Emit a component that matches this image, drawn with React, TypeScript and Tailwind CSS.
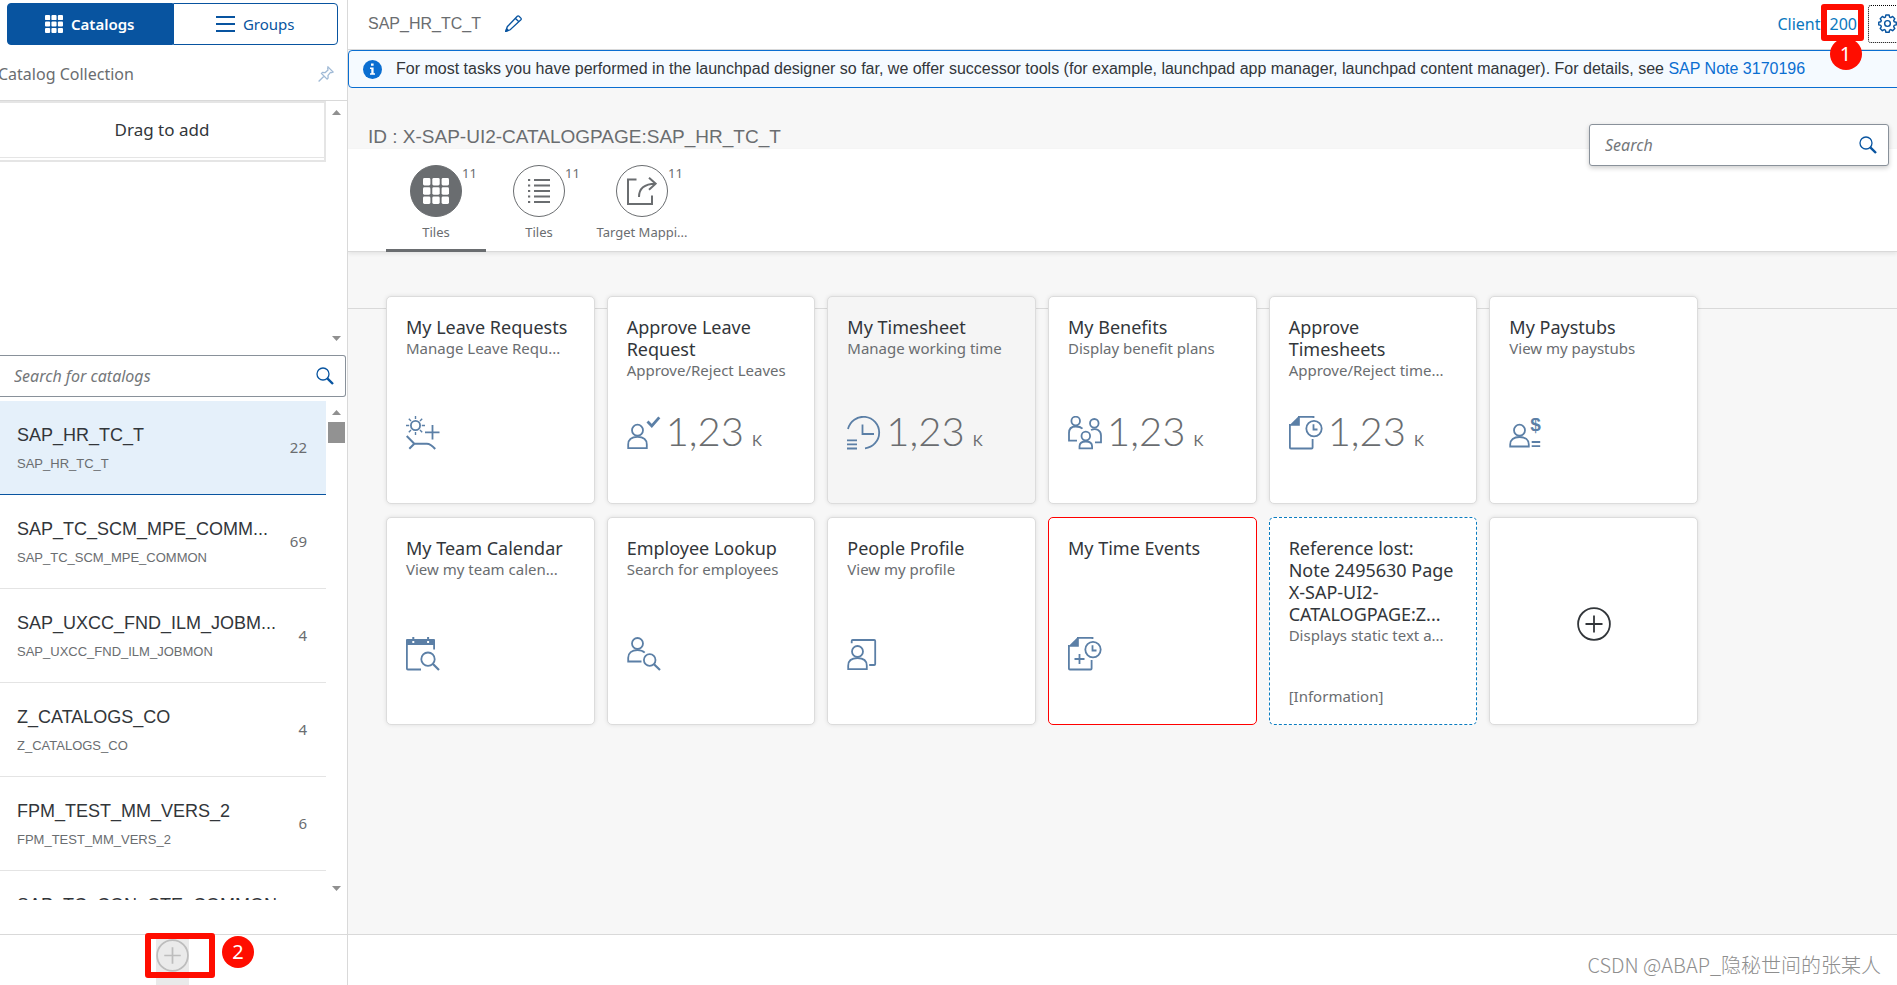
import type { ReactNode } from "react";

type IconProps = { className?: string };

function TileIcon({ children }: { children: ReactNode }) {
  return (
    <svg
      className="h-[34px] w-[34px] shrink-0 text-[#5b7fa6]"
      viewBox="0 0 34 34"
      fill="none"
      stroke="currentColor"
      strokeWidth="1.8"
      aria-hidden="true"
    >
      {children}
    </svg>
  );
}

const LeaveIcon = () => (
  <TileIcon>
    <circle cx="9.5" cy="9.5" r="4.6" />
    <path
      strokeWidth="1.4"
      d="M9.5 0v3M9.5 16v3M0 9.5h3.2M15.8 9.5H19M2.8 2.8l2.2 2.2M14 14l2.2 2.2M16.2 2.8L14 5M5 14l-2.200 2.200"
    />
    <path d="M26.500 9v14.500M19 16.300h14.500" />
    <path strokeWidth="2" d="M.7 20l7.600 7.700h12.500c3.700 0 6 2.500 8.400 5.300M8.300 27.700l-5 5" />
  </TileIcon>
);

const ApproveLeaveIcon = () => (
  <TileIcon>
    <circle cx="10.500" cy="14.200" r="5.500" />
    <path d="M1.200 32.200v-3.700c0-4.800 3.500-7.700 9.300-7.700s9.300 2.900 9.300 7.700v3.700z" />
    <path strokeWidth="2.800" d="M20.500 5.500l4.300 4.500 7.500-8.700" />
  </TileIcon>
);

const TimesheetIcon = () => (
  <TileIcon>
    <path d="M1 13A15.800 15.800 0 1 1 18 32.300" />
    <path d="M15.500 8.500v9.500h11.500M0 24.300h10M0 28.400h10M0 32.500h10" />
  </TileIcon>
);

const BenefitsIcon = () => (
  <TileIcon>
    <circle cx="7.700" cy="5" r="4.300" />
    <circle cx="26.300" cy="7.300" r="4.300" />
    <circle cx="17.800" cy="20" r="4.300" />
    <path d="M9 24.700H1V17c0-4 2.500-6.500 6.700-6.500 3 0 5.300.7 6.800 2.200" />
    <path d="M23 14c5.500-2.300 10 .7 10 5.500v6.800h-6" />
    <path d="M11.500 32.300v-1.800c0-3 2.300-5 6.300-5s6.300 2 6.300 5v1.800z" />
  </TileIcon>
);

const DocClock = () => (
  <>
    <path fill="currentColor" stroke="none" d="M0 9.800L9.800 0h1v9.800z" />
    <path d="M9 .9h15.500v1.200M.9 8v23.500a1 1 0 0 0 1 1h20.700a1 1 0 0 0 1-1V23" />
    <circle cx="25" cy="12.600" r="7.700" />
    <path d="M24.500 8.300v5.200h4" />
  </>
);

const ApproveTimesheetIcon = () => (
  <TileIcon>
    <DocClock />
  </TileIcon>
);

const PaystubIcon = () => (
  <TileIcon>
    <circle cx="10.500" cy="14.200" r="5.500" />
    <path d="M1.200 30.500v-2c0-4.500 3.500-7.500 9.300-7.500s9.300 3 9.300 7.500v2z" />
    <path d="M22.700 26h8.500M22.700 30.200h8.500" />
    <text
      x="26.500"
      y="15"
      textAnchor="middle"
      fill="currentColor"
      stroke="none"
      className="font-['Liberation_Sans',Arial,sans-serif] text-[19px] font-bold"
    >
      $
    </text>
  </TileIcon>
);

const CalendarIcon = () => (
  <TileIcon>
    <path
      fill="currentColor"
      stroke="none"
      fillRule="evenodd"
      d="M1 2h5.300V0h2v2h12.800V0h2v2H28a1 1 0 0 1 1 1v5H0V3a1 1 0 0 1 1-1zm5.300 2v2h2V4zm14.800 0v2h2V4z"
    />
    <path d="M.9 7v24.500a1 1 0 0 0 1 1H15M28.100 7v5.500" />
    <circle cx="22" cy="22.200" r="6.700" />
    <path strokeWidth="2.200" d="M27 27l6 6" />
  </TileIcon>
);

const LookupIcon = () => (
  <TileIcon>
    <circle cx="10.500" cy="6.500" r="5.500" />
    <path d="M14.500 24.500H1.200v-3.700c0-4.800 3.500-7.700 9.300-7.700 3.200 0 5.600 1 7.200 2.600" />
    <circle cx="22.700" cy="23" r="5.800" />
    <path strokeWidth="2.200" d="M27 27.200l6 5.800" />
  </TileIcon>
);

const ProfileIcon = () => (
  <TileIcon>
    <path d="M4.700 6.300V4a1 1 0 0 1 1-1h21.500a1 1 0 0 1 1 1v23a1 1 0 0 1-1 1h-5" />
    <circle cx="10.500" cy="14.500" r="5.500" />
    <path d="M1.200 32.200v-3.500c0-4.700 3.500-7.500 9.300-7.500s9.300 2.800 9.300 7.500v3.500z" />
  </TileIcon>
);

const TimeEventsIcon = () => (
  <TileIcon>
    <DocClock />
    <path d="M11.500 17v10M6.500 22h10" />
  </TileIcon>
);

const GridIcon = ({ className }: IconProps) => (
  <svg className={className} viewBox="0 0 26 26" fill="currentColor" aria-hidden="true">
    {[0, 9.3, 18.6].map((y) =>
      [0, 9.3, 18.6].map((x) => <rect key={`${x}-${y}`} x={x} y={y} width="7.4" height="7.4" rx="1.4" />),
    )}
  </svg>
);

const SearchIcon = () => (
  <svg className="h-[18px] w-[18px] shrink-0 text-[#0854a0]" viewBox="0 0 18 18" fill="none" stroke="currentColor" aria-hidden="true">
    <circle cx="7" cy="7" r="6" strokeWidth="1.3" />
    <path strokeWidth="2.4" d="M11.300 11.300l5.700 5.700" />
  </svg>
);

const PlusCircle = ({ className }: IconProps) => (
  <svg className={className} viewBox="0 0 34 34" fill="none" stroke="currentColor" strokeWidth="1.8" aria-hidden="true">
    <circle cx="17" cy="17" r="15.900" />
    <path d="M17 8.500v17M8.500 17h17" />
  </svg>
);

const Arrow = ({ down }: { down?: boolean }) => (
  <svg className="h-[5px] w-[9px] text-[#909090]" viewBox="0 0 9 5" fill="currentColor" aria-hidden="true">
    <path d={down ? "M0 0h9L4.500 5z" : "M0 5h9L4.500 0z"} />
  </svg>
);

type Catalog = { title: string; id: string; count: string };

const catalogs: Catalog[] = [
  { title: "SAP_HR_TC_T", id: "SAP_HR_TC_T", count: "22" },
  { title: "SAP_TC_SCM_MPE_COMM...", id: "SAP_TC_SCM_MPE_COMMON", count: "69" },
  { title: "SAP_UXCC_FND_ILM_JOBM...", id: "SAP_UXCC_FND_ILM_JOBMON", count: "4" },
  { title: "Z_CATALOGS_CO", id: "Z_CATALOGS_CO", count: "4" },
  { title: "FPM_TEST_MM_VERS_2", id: "FPM_TEST_MM_VERS_2", count: "6" },
  { title: "SAP_TC_CON_CTE_COMMON", id: "", count: "" },
];

type Tile = {
  title: string;
  subtitle?: string;
  icon?: ReactNode;
  value?: string;
  info?: string;
  look?: "hover" | "error" | "lost";
};

const tiles: Tile[] = [
  { title: "My Leave Requests", subtitle: "Manage Leave Requ...", icon: <LeaveIcon /> },
  { title: "Approve Leave Request", subtitle: "Approve/Reject Leaves", icon: <ApproveLeaveIcon />, value: "1,23" },
  { title: "My Timesheet", subtitle: "Manage working time", icon: <TimesheetIcon />, value: "1,23", look: "hover" },
  { title: "My Benefits", subtitle: "Display benefit plans", icon: <BenefitsIcon />, value: "1,23" },
  { title: "Approve\nTimesheets", subtitle: "Approve/Reject time...", icon: <ApproveTimesheetIcon />, value: "1,23" },
  { title: "My Paystubs", subtitle: "View my paystubs", icon: <PaystubIcon /> },
  { title: "My Team Calendar", subtitle: "View my team calen...", icon: <CalendarIcon /> },
  { title: "Employee Lookup", subtitle: "Search for employees", icon: <LookupIcon /> },
  { title: "People Profile", subtitle: "View my profile", icon: <ProfileIcon /> },
  { title: "My Time Events", icon: <TimeEventsIcon />, look: "error" },
  {
    title: "Reference lost:\nNote 2495630 Page\nX-SAP-UI2-\nCATALOGPAGE:Z...",
    subtitle: "Displays static text a...",
    info: "[Information]",
    look: "lost",
  },
];

const tileLooks = {
  plain: "border-[#dcdcdc] bg-white shadow-[0_0_4px_rgba(0,0,0,0.1)]",
  hover: "border-[#dcdcdc] bg-[#f5f5f5] shadow-[0_0_4px_rgba(0,0,0,0.1)]",
  error: "border-[#ff0000] bg-white",
  lost: "border-dashed border-[#0a7cc0] bg-white",
};

function TileCard({ tile }: { tile: Tile }) {
  return (
    <button
      type="button"
      className={`flex h-52 flex-col rounded-[5px] border pt-[19px] pr-3 pb-[18px] pl-[19px] text-left ${tileLooks[tile.look ?? "plain"]}`}
    >
      <span className={`flex w-full flex-col ${tile.info ? "flex-1" : "h-[100px]"}`}>
        <span className="text-lg leading-[22px] whitespace-pre-line text-[#32363a]">{tile.title}</span>
        {tile.subtitle && (
          <span className="text-[15px] leading-[21px] whitespace-nowrap text-[#6a6d70]">{tile.subtitle}</span>
        )}
      </span>
      {tile.icon && (
        <span className="flex items-start text-[#6a6d70]">
          {tile.icon}
          {tile.value && (
            <span className="flex items-baseline gap-2 pl-[5px] font-['Lato',sans-serif]">
              <span className="text-[40px] leading-[30px] font-light">{tile.value}</span>
              <span className="text-[15px]">K</span>
            </span>
          )}
        </span>
      )}
      {tile.info && <span className="text-[15px] leading-5 text-[#6a6d70]">{tile.info}</span>}
    </button>
  );
}

function Sidebar() {
  return (
    <aside className="flex w-[348px] shrink-0 flex-col overflow-hidden border-r border-[#d9d9d9] bg-white">
      <div className="flex h-12 shrink-0 pt-[3px] pr-[9px] pl-[7px]">
        <button
          type="button"
          className="flex h-[42px] flex-1 items-center justify-center gap-2 rounded-l border border-[#0854a0] bg-[#0854a0] text-[15px] font-semibold text-white"
        >
          <GridIcon className="h-[18px] w-[18px]" />
          Catalogs
        </button>
        <button
          type="button"
          className="flex h-[42px] flex-1 items-center justify-center gap-2 rounded-r border border-[#0854a0] text-[15px] text-[#0854a0]"
        >
          <svg className="h-4 w-[19px]" viewBox="0 0 19 16" fill="currentColor" aria-hidden="true">
            <path d="M0 0h19v2H0zM0 7h19v2H0zM0 14h19v2H0z" />
          </svg>
          Groups
        </button>
      </div>
      <div className="flex h-[53px] shrink-0 items-center justify-between border-b border-[#d9d9d9] pr-[13px]">
        <h2 className="-ml-0.5 text-base text-[#6a6d70]">Catalog Collection</h2>
        <button type="button" aria-label="Pin" className="text-[#a0bad6]">
          <svg className="h-4 w-4" viewBox="0 0 16 16" fill="none" stroke="currentColor" strokeWidth="1.3" aria-hidden="true">
            <path d="M10 .9l5.100 5.100-1.300.6-1.300-.2-2.500 3 .1 2.700-1 1L3.500 7.500l1-1 2.700.1 2.800-2.500-.3-1.600zM6.200 10L.6 15.500" />
          </svg>
        </button>
      </div>
      <div className="flex h-[254px] shrink-0">
        <div className="flex-1">
          <div className="border-2 border-l-0 border-[#e5e5e5] pb-0.5">
            <div className="flex h-[55px] items-center justify-center border-b border-[#e5e5e5] text-[17px] text-[#32363a]">
              Drag to add
            </div>
          </div>
        </div>
        <div className="flex w-[21px] flex-col items-center justify-between pt-[9px] pb-[14px]">
          <Arrow />
          <Arrow down />
        </div>
      </div>
      <div className="mr-px flex h-[42px] shrink-0 items-center rounded-r-[3px] border border-l-0 border-[#89919a] pr-[11px] pl-3.5">
        <input
          type="search"
          aria-label="Search for catalogs"
          placeholder="Search for catalogs"
          className="min-w-0 flex-1 text-base text-[#32363a] outline-none placeholder:text-[#74777a] placeholder:italic"
        />
        <SearchIcon />
      </div>
      <div className="mt-1 mb-[34px] flex min-h-0 flex-1">
        <ul className="min-w-0 flex-1 overflow-hidden">
          {catalogs.map((c, i) => (
            <li
              key={c.title}
              className={`flex h-[94px] items-center justify-between border-b pr-[19px] pl-[17px] ${
                i === 0 ? "border-[#0854a0] bg-[#e5f0fa]" : "border-[#e4e4e4]"
              }`}
            >
              <div className="font-['Liberation_Sans',Arial,sans-serif] whitespace-nowrap">
                <div className="h-8 text-lg leading-[34px] text-[#32363a]">{c.title}</div>
                <div className="h-7 text-[13px] leading-7 text-[#6a6d70]">{c.id}</div>
              </div>
              <span className="text-[15px] text-[#6a6d70]">{c.count}</span>
            </li>
          ))}
        </ul>
        <div className="flex w-[21px] flex-col items-center pt-[9px] pb-[9px]">
          <Arrow />
          <div className="mt-[7px] h-[21px] w-[17px] bg-[#929292]" />
          <div className="flex-1" />
          <Arrow down />
        </div>
      </div>
      <footer className="relative h-[51px] shrink-0 border-t border-[#d9d9d9]">
        <div className="flex h-full justify-center pr-0.5">
          <button type="button" aria-label="Add catalog" className="flex w-[33px] items-start bg-[#eaeaea] pt-1">
            <PlusCircle className="h-[33px] w-[33px] text-[#bdbdbd]" />
          </button>
        </div>
        <div className="absolute -top-0.5 left-[145px] h-[45px] w-[70px] rounded-[3px] border-[6px] border-[#ff0d00]" />
        <div className="absolute top-px left-[222px] flex h-8 w-8 items-center justify-center rounded-full bg-[#ff0d00] text-xl text-white">
          2
        </div>
      </footer>
    </aside>
  );
}

const tabs = [
  {
    label: "Tiles",
    active: true,
    icon: <GridIcon className="h-[26px] w-[26px]" />,
  },
  {
    label: "Tiles",
    active: false,
    icon: (
      <svg className="h-6 w-[22px]" viewBox="0 0 22 24" fill="currentColor" aria-hidden="true">
        {[0, 5.5, 11, 16.5, 22].map((y) => (
          <path key={y} d={`M0 ${y}h2.200v2H0zM6 ${y}h16v2H6z`} />
        ))}
      </svg>
    ),
  },
  {
    label: "Target Mappi...",
    active: false,
    icon: (
      <svg className="h-7 w-[30px]" viewBox="0 0 30 28" fill="none" stroke="currentColor" strokeWidth="2" aria-hidden="true">
        <path d="M9.500 2.500H1v24.500h24v-8.500" />
        <path d="M12 20c0-8 5-13.300 16.500-13.300M22 .8l6.700 5.900L22 12.800" />
      </svg>
    ),
  },
];

export default function App() {
  return (
    <div className="flex h-screen overflow-hidden bg-white font-['Noto_Sans',sans-serif]">
      <Sidebar />
      <main className="flex min-w-0 flex-1 flex-col overflow-hidden bg-[#f7f7f7]">
        <header className="flex h-[50px] shrink-0 items-center border-b border-[#d9d9d9] bg-white pb-0.5 pl-5">
          <h1 className="font-['Liberation_Sans',Arial,sans-serif] text-base text-[#6a6d70]">SAP_HR_TC_T</h1>
          <button type="button" aria-label="Edit" className="ml-6 text-[#0854a0]">
            <svg className="h-[17px] w-[17px]" viewBox="0 0 17 17" fill="none" stroke="currentColor" strokeWidth="1.3" aria-hidden="true">
              <path d="M12.300 1.200a1.200 1.200 0 0 1 1.700 0l1.900 1.900a1.200 1.200 0 0 1 0 1.700L5.200 14.800l-4.400 1.500 1.500-4.600zM10.300 3.200l3.500 3.500" />
              <path fill="currentColor" d="M1.600 13.800l1.700 1.700-2.500.8z" />
            </svg>
          </button>
          <div className="ml-auto flex items-center gap-[9px] pr-[11px] text-base leading-6 text-[#0a78be]">
            <span>Client</span>
            <span className="relative">
              200
              <span className="absolute -top-2 -left-[9px] h-[37px] w-[43px] rounded-[3px] border-[6px] border-[#ff0d00]" />
              <span className="absolute top-[26px] left-0 z-10 flex h-8 w-8 items-center justify-center rounded-full bg-[#ff0d00] text-xl text-white">
                1
              </span>
            </span>
          </div>
          <button
            type="button"
            aria-label="Settings"
            className="-mr-[9px] flex h-[38px] w-[38px] shrink-0 items-center justify-center rounded-[3px] border border-dotted border-black text-[#0854a0]"
          >
            <svg className="h-[19px] w-[19px]" viewBox="0 0 20 20" fill="none" stroke="currentColor" strokeWidth="1.5" strokeLinejoin="round" aria-hidden="true">
              <path d="M8.300 1h3.400l.5 2.300 1.200.5 2-1.200 2.300 2.300-1.200 2 .5 1.300 2.200.5v2.800l-2.200.5-.5 1.300 1.200 2-2.300 2.300-2-1.200-1.200.5-.5 2.300H8.300l-.5-2.300-1.200-.5-2 1.200-2.300-2.300 1.200-2-.5-1.300L.8 11.500V8.700L3 8.200l.5-1.300-1.200-2 2.300-2.300 2 1.200 1.200-.5z" />
              <circle cx="10" cy="10" r="3" />
            </svg>
          </button>
        </header>

        <div className="-mr-1 flex h-[38px] shrink-0 items-center rounded border border-[#0a6ed1] bg-[#f5faff] pl-3.5 font-['Liberation_Sans',Arial,sans-serif] text-base whitespace-nowrap text-[#32363a]">
          <svg className="mr-[14px] h-[19px] w-[19px] shrink-0" viewBox="0 0 19 19" aria-hidden="true">
            <circle cx="9.500" cy="9.500" r="9.500" fill="#0a6ed1" />
            <path fill="#fff" d="M8 3.500h2.600v2.300H8zM7 7.500h3.600v5.700H12v1.600H7v-1.600h1.300V9H7z" />
          </svg>
          <p>
            For most tasks you have performed in the launchpad designer so far, we offer successor tools (for example,
            launchpad app manager, launchpad content manager). For details, see{" "}
            <a href="#note" className="text-[#0a6ed1]">
              SAP Note 3170196
            </a>
          </p>
        </div>

        <div className="relative shrink-0">
          <div className="flex h-[61px] items-end pl-5">
            <p className="font-['Liberation_Sans',Arial,sans-serif] text-[19px] leading-6 text-[#6a6d70]">
              ID : X-SAP-UI2-CATALOGPAGE:SAP_HR_TC_T
            </p>
          </div>
          <div className="absolute top-9 right-2 flex h-[42px] w-[300px] items-center rounded-[3px] border border-[#89919a] bg-white pr-[11px] pl-[15px] shadow-[0_2px_5px_rgba(0,0,0,0.2)]">
            <input
              type="search"
              aria-label="Search"
              placeholder="Search"
              className="min-w-0 flex-1 text-base text-[#32363a] outline-none placeholder:text-[#74777a] placeholder:italic"
            />
            <SearchIcon />
          </div>
          <nav className="flex h-[103px] gap-[3px] border-b border-[#d9d9d9] bg-white pl-[38px] shadow-[0_2px_4px_rgba(0,0,0,0.08)]">
            {tabs.map((t, i) => (
              <button
                key={i}
                type="button"
                className={`flex h-[103px] w-[100px] flex-col items-center border-b-[3px] pt-4 text-[13px] leading-5 text-[#6a6d70] ${
                  t.active ? "border-[#6a6d70]" : "border-transparent"
                }`}
              >
                <span
                  className={`relative flex h-[52px] w-[52px] items-center justify-center rounded-full border border-[#6a6d70] ${
                    t.active ? "bg-[#6a6d70] text-white" : "bg-white"
                  }`}
                >
                  {t.icon}
                  <span className="absolute -top-[3px] left-[51px] text-[#6a6d70]">11</span>
                </span>
                <span className="pt-[5px] whitespace-nowrap">{t.label}</span>
              </button>
            ))}
          </nav>
        </div>

        <div className="h-[57px] shrink-0 border-b border-[#d9d9d9]" />
        <section className="-mt-[13px] min-h-0 flex-1 pl-[38px]">
          <div className="grid w-full max-w-[1312px] grid-cols-6 gap-x-3 gap-y-[13px]">
            {tiles.map((t) => (
              <TileCard key={t.title} tile={t} />
            ))}
            <button
              type="button"
              aria-label="Add tile"
              className="flex h-52 items-center justify-center rounded-[5px] border border-[#dcdcdc] bg-white pt-1.5 shadow-[0_0_4px_rgba(0,0,0,0.1)]"
            >
              <PlusCircle className="h-[34px] w-[34px] text-[#32363a]" />
            </button>
          </div>
        </section>

        <footer className="flex h-[51px] shrink-0 items-center justify-end border-t border-[#d9d9d9] bg-white pt-2.5 pr-4">
          <span className="font-['Noto_Sans_CJK_SC',sans-serif] text-xl leading-7 font-light text-[#8e8e8e]">
            CSDN @ABAP_隐秘世间的张某人
          </span>
        </footer>
      </main>
    </div>
  );
}
